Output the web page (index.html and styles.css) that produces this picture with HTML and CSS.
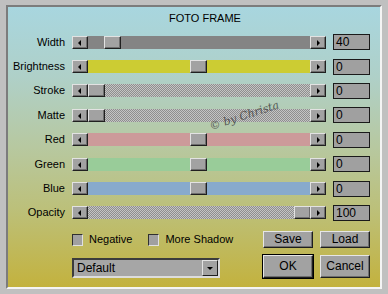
FILE: index.html
```html
<!DOCTYPE html>
<html>
<head>
<meta charset="utf-8">
<link rel="stylesheet" href="styles.css">
</head>
<body>
<div class="frame">
  <div class="title">FOTO FRAME</div>
  <div class="rows">
    <div class="label">Width</div>
    <div class="slider">
      <div class="arrow left"></div>
      <div class="track solid-gray"><div class="thumb" style="left:16px"></div></div>
      <div class="arrow right"></div>
    </div>
    <div class="value">40</div>

    <div class="label">Brightness</div>
    <div class="slider">
      <div class="arrow left"></div>
      <div class="track yellow"><div class="thumb" style="left:102px"></div></div>
      <div class="arrow right"></div>
    </div>
    <div class="value">0</div>

    <div class="label">Stroke</div>
    <div class="slider">
      <div class="arrow left"></div>
      <div class="track checker"><div class="thumb" style="left:0px"></div></div>
      <div class="arrow right"></div>
    </div>
    <div class="value">0</div>

    <div class="label">Matte</div>
    <div class="slider">
      <div class="arrow left"></div>
      <div class="track checker"><div class="thumb" style="left:0px"></div></div>
      <div class="arrow right"></div>
    </div>
    <div class="value">0</div>

    <div class="label">Red</div>
    <div class="slider">
      <div class="arrow left"></div>
      <div class="track red"><div class="thumb" style="left:102px"></div></div>
      <div class="arrow right"></div>
    </div>
    <div class="value">0</div>

    <div class="label">Green</div>
    <div class="slider">
      <div class="arrow left"></div>
      <div class="track green"><div class="thumb" style="left:102px"></div></div>
      <div class="arrow right"></div>
    </div>
    <div class="value">0</div>

    <div class="label">Blue</div>
    <div class="slider">
      <div class="arrow left"></div>
      <div class="track blue"><div class="thumb" style="left:102px"></div></div>
      <div class="arrow right"></div>
    </div>
    <div class="value">0</div>

    <div class="label">Opacity</div>
    <div class="slider">
      <div class="arrow left"></div>
      <div class="track checker"><div class="thumb" style="left:206px"></div></div>
      <div class="arrow right"></div>
    </div>
    <div class="value">100</div>
  </div>

  <div class="bottom">
    <div class="checks">
      <span class="check"><span class="box"></span>Negative</span>
      <span class="check"><span class="box"></span>More Shadow</span>
    </div>
    <div class="btn">Save</div>
    <div class="btn">Load</div>
    <div class="select-wrap">
      <div class="select"><span>Default</span><span class="drop"></span></div>
    </div>
    <div class="btn big default">OK</div>
    <div class="btn big">Cancel</div>
  </div>

  <div class="watermark">© by Christa</div>
</div>
</body>
</html>
```

FILE: styles.css
```css
html, body {
  margin: 0;
  padding: 0;
}
body {
  background: #c0c0c0;
  width: 388px;
  height: 294px;
  overflow: hidden;
  font-family: "Liberation Sans", Arial, sans-serif;
  font-size: 11px;
  color: #000;
}
.frame {
  position: relative;
  margin: 5px 0 0 6px;
  width: 372px;
  height: 280px;
  border-style: solid;
  border-width: 2px;
  border-color: #7c7c7c #f4f4f4 #f4f4f4 #7c7c7c;
  background: linear-gradient(180deg, #a8d6df 0%, #afd0c8 25%, #b7c8a0 50%, #bcc07a 72%, #c3b23e 100%);
}
.title {
  height: 23px;
  box-sizing: border-box;
  padding: 5px 0 0 161px;
  line-height: 13px;
  font-size: 11px;
}
.rows {
  display: grid;
  grid-template-columns: 57px 254px 37px;
  grid-auto-rows: 24.4px;
  column-gap: 7px;
  align-items: center;
}
.label {
  text-align: right;
  line-height: 13px;
}
.slider {
  display: flex;
  height: 13px;
}
.arrow {
  width: 16px;
  height: 13px;
  box-sizing: border-box;
  background: #a2a2a2;
  border-style: solid;
  border-width: 1px;
  border-color: #e2e2e2 #202020 #202020 #e2e2e2;
  box-shadow: inset -1px -1px #6e6e6e;
  position: relative;
  flex: none;
}
.arrow::after {
  content: "";
  position: absolute;
  top: 3px;
  width: 0;
  height: 0;
  border-top: 3px solid transparent;
  border-bottom: 3px solid transparent;
}
.arrow.left::after {
  left: 5px;
  border-right: 3px solid #000;
}
.arrow.right::after {
  left: 6px;
  border-left: 3px solid #000;
}
.track {
  flex: 1;
  position: relative;
}
.thumb {
  position: absolute;
  top: 0;
  width: 17px;
  height: 13px;
  box-sizing: border-box;
  background: #a2a2a2;
  border-style: solid;
  border-width: 1px;
  border-color: #e2e2e2 #202020 #202020 #e2e2e2;
  box-shadow: inset -1px -1px #6e6e6e;
}
.solid-gray { background: #848484; }
.yellow { background: #cccc33; }
.red { background: #cc9a9a; }
.green { background: #99cc99; }
.blue { background: #88aacc; }
.checker {
  background-color: #c4c4c4;
  background-image: conic-gradient(#8e8e8e 25%, transparent 0 50%, #8e8e8e 0 75%, transparent 0);
  background-size: 2px 2px;
}
.value {
  height: 16px;
  box-sizing: border-box;
  border: 1px solid #1a1a1a;
  background: #a0a0a0;
  line-height: 14px;
  padding-left: 2px;
  font-size: 12px;
}
.bottom {
  display: grid;
  grid-template-columns: 184px 50px 50px;
  grid-template-rows: 17px 23px;
  column-gap: 7px;
  row-gap: 7px;
  margin: 6px 0 0 64px;
  align-items: center;
}
.checks {
  display: flex;
  gap: 16px;
  align-items: center;
}
.check {
  display: flex;
  align-items: center;
  gap: 6px;
  line-height: 13px;
}
.box {
  width: 11px;
  height: 12px;
  box-sizing: border-box;
  background: #a0a0a0;
  border-style: solid;
  border-width: 1px;
  border-color: #303030 #e0e0e0 #e0e0e0 #303030;
}
.btn {
  height: 17px;
  box-sizing: border-box;
  background: #a2a2a2;
  border-style: solid;
  border-width: 1px;
  border-color: #e6e6e6 #1e1e1e #1e1e1e #e6e6e6;
  box-shadow: inset -1px -1px #6e6e6e;
  text-align: center;
  line-height: 15px;
  font-size: 12px;
}
.btn.big {
  height: 23px;
  line-height: 21px;
}
.btn.default {
  outline: 1px solid #000;
}
.select-wrap {
  align-self: end;
  padding-right: 36px;
}
.select {
  height: 20px;
  box-sizing: border-box;
  border-style: solid;
  border-width: 2px;
  border-color: #3c3c3c #dcdcdc #dcdcdc #3c3c3c;
  background: #a6a6a6;
  display: flex;
  align-items: center;
  justify-content: space-between;
  padding-left: 3px;
  font-size: 12px;
}
.drop {
  width: 16px;
  height: 16px;
  box-sizing: border-box;
  background: #a2a2a2;
  border-style: solid;
  border-width: 1px;
  border-color: #e2e2e2 #202020 #202020 #e2e2e2;
  position: relative;
}
.drop::after {
  content: "";
  position: absolute;
  left: 4px;
  top: 6px;
  border-left: 3px solid transparent;
  border-right: 3px solid transparent;
  border-top: 3px solid #000;
}
.watermark {
  position: absolute;
  left: 204px;
  top: 113px;
  font-family: "DejaVu Serif", serif;
  font-style: italic;
  font-size: 11px;
  color: #444;
  transform: rotate(-18deg);
  transform-origin: left bottom;
  opacity: 0.85;
}
```
